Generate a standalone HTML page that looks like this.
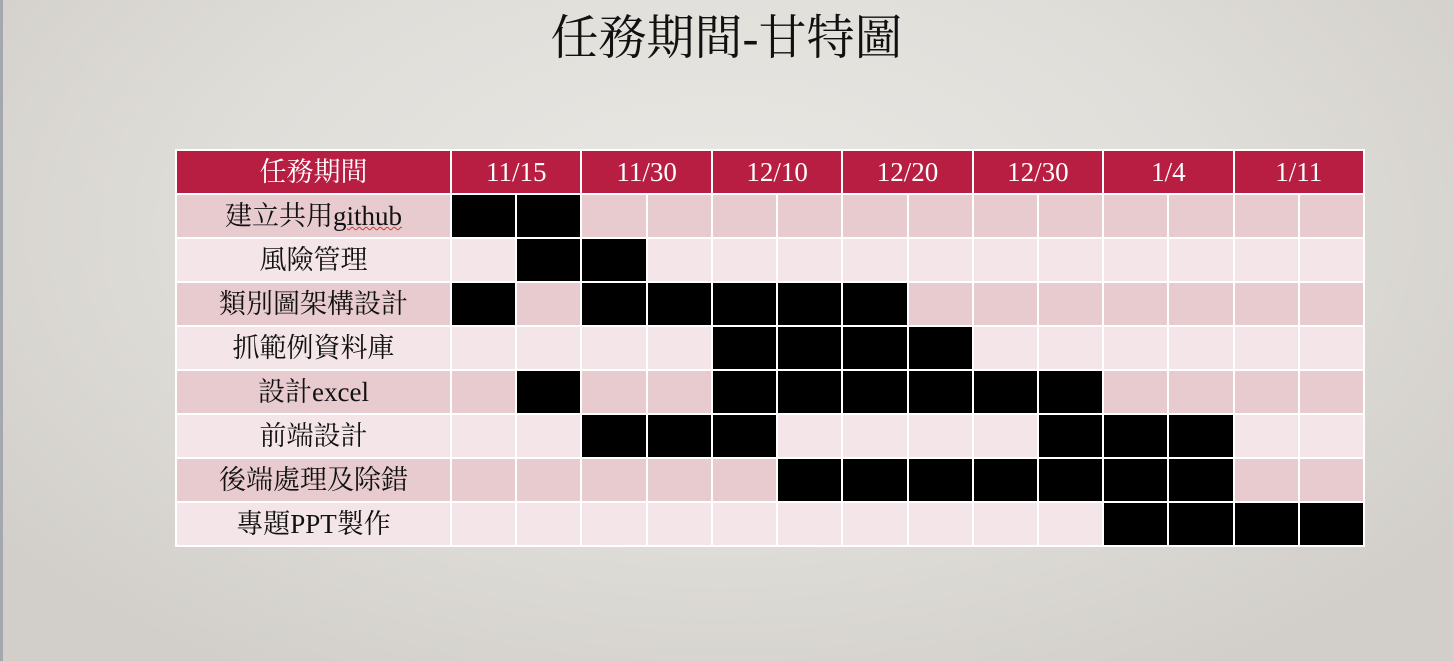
<!DOCTYPE html>
<html><head><meta charset="utf-8"><style>
html,body{margin:0;padding:0;}
body{width:1453px;height:661px;overflow:hidden;position:relative;
background:radial-gradient(ellipse 900px 520px at 720px 230px,#e9e8e4 0%,#e0ded9 55%,#d2cfca 100%);
font-family:"Liberation Serif","Noto Serif CJK SC",serif;}
.strip{position:absolute;left:0;top:0;width:3px;height:661px;background:#a3a7ae;}
h1{position:absolute;left:0;width:1453px;top:8px;margin:0;text-align:center;font-weight:normal;font-size:48px;line-height:62px;color:#111;}
table{position:absolute;left:175px;top:149px;border-collapse:collapse;table-layout:fixed;width:1190px;}
tr{height:44px;}
td{border:2px solid #fff;padding:0;text-align:center;font-size:27px;line-height:30px;color:#111;box-sizing:border-box;}
tr.h td{background:#b81d42;color:#fff;font-size:27px;}
tr.o td{background:#e8cbcf;}
tr.e td{background:#f3e5e8;}
tr td.b{background:#000;}
</style></head><body>
<div class="strip"></div>
<h1>任務期間-甘特圖</h1>
<table>
<colgroup><col style="width:275px"><col span="14" style="width:65.2px"></colgroup>
<tr class="h"><td>任務期間</td><td colspan="2">11/15</td><td colspan="2">11/30</td><td colspan="2">12/10</td><td colspan="2">12/20</td><td colspan="2">12/30</td><td colspan="2">1/4</td><td colspan="2">1/11</td></tr>
<tr class="o"><td>建立共用<span style="text-decoration:underline wavy #d33;text-decoration-thickness:1px">github</span></td><td class="b"></td><td class="b"></td><td></td><td></td><td></td><td></td><td></td><td></td><td></td><td></td><td></td><td></td><td></td><td></td></tr>
<tr class="e"><td>風險管理</td><td></td><td class="b"></td><td class="b"></td><td></td><td></td><td></td><td></td><td></td><td></td><td></td><td></td><td></td><td></td><td></td></tr>
<tr class="o"><td>類別圖架構設計</td><td class="b"></td><td></td><td class="b"></td><td class="b"></td><td class="b"></td><td class="b"></td><td class="b"></td><td></td><td></td><td></td><td></td><td></td><td></td><td></td></tr>
<tr class="e"><td>抓範例資料庫</td><td></td><td></td><td></td><td></td><td class="b"></td><td class="b"></td><td class="b"></td><td class="b"></td><td></td><td></td><td></td><td></td><td></td><td></td></tr>
<tr class="o"><td>設計excel</td><td></td><td class="b"></td><td></td><td></td><td class="b"></td><td class="b"></td><td class="b"></td><td class="b"></td><td class="b"></td><td class="b"></td><td></td><td></td><td></td><td></td></tr>
<tr class="e"><td>前端設計</td><td></td><td></td><td class="b"></td><td class="b"></td><td class="b"></td><td></td><td></td><td></td><td></td><td class="b"></td><td class="b"></td><td class="b"></td><td></td><td></td></tr>
<tr class="o"><td>後端處理及除錯</td><td></td><td></td><td></td><td></td><td></td><td class="b"></td><td class="b"></td><td class="b"></td><td class="b"></td><td class="b"></td><td class="b"></td><td class="b"></td><td></td><td></td></tr>
<tr class="e"><td>專題PPT製作</td><td></td><td></td><td></td><td></td><td></td><td></td><td></td><td></td><td></td><td></td><td class="b"></td><td class="b"></td><td class="b"></td><td class="b"></td></tr>
</table>
</body></html>
